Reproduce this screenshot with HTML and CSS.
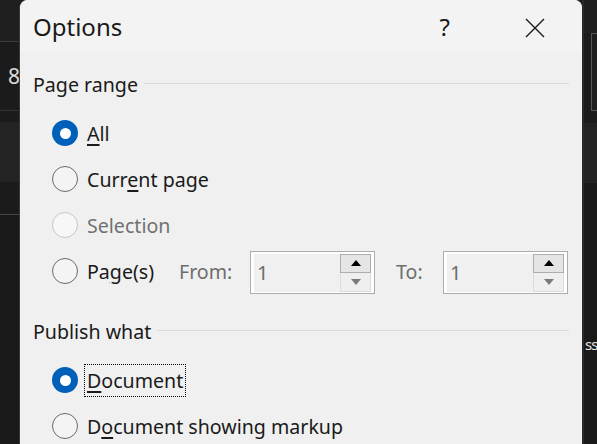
FILE: index.html
```html
<!DOCTYPE html>
<html>
<head>
<meta charset="utf-8">
<link rel="stylesheet" href="styles.css">
</head>
<body>
<div class="screen">
  <div class="bg-left">
    <div class="l-top"></div>
    <div class="l-num">8</div>
    <div class="l-gap"></div>
    <div class="l-band"></div>
    <div class="l-gap2"></div>
    <div class="l-rest"></div>
  </div>
  <div class="dialog">
    <div class="titlebar">
      <span class="title">Options</span>
      <span class="help">?</span>
      <span class="close">
        <svg width="20" height="20" viewBox="0 0 20 20"><path d="M1 1 L19 19 M19 1 L1 19" stroke="#1a1a1a" stroke-width="1.4" fill="none"/></svg>
      </span>
    </div>
    <div class="content">
      <div class="group-head"><span>Page range</span><span class="rule"></span></div>
      <div class="options">
        <div class="row"><span class="radio checked"><span class="dot"></span></span><span class="label"><u>A</u>ll</span></div>
        <div class="row"><span class="radio"></span><span class="label">Curr<u>e</u>nt page</span></div>
        <div class="row disabled"><span class="radio"></span><span class="label">Selection</span></div>
        <div class="row">
          <span class="radio"></span><span class="label pages-label">Pa<u>g</u>e(s)</span>
          <span class="field-label from-label">From:</span>
          <span class="spin">
            <span class="spin-field">1</span>
            <span class="spin-btns">
              <span class="spin-up"><svg width="10" height="6" viewBox="0 0 10 6"><path d="M0 6 L5 0 L10 6 Z" fill="#000"/></svg></span>
              <span class="spin-down"><svg width="10" height="6" viewBox="0 0 10 6"><path d="M0 0 L5 6 L10 0 Z" fill="#7a7a7a"/></svg></span>
            </span>
          </span>
          <span class="field-label to-label">To:</span>
          <span class="spin">
            <span class="spin-field">1</span>
            <span class="spin-btns">
              <span class="spin-up"><svg width="10" height="6" viewBox="0 0 10 6"><path d="M0 6 L5 0 L10 6 Z" fill="#000"/></svg></span>
              <span class="spin-down"><svg width="10" height="6" viewBox="0 0 10 6"><path d="M0 0 L5 6 L10 0 Z" fill="#7a7a7a"/></svg></span>
            </span>
          </span>
        </div>
      </div>
      <div class="group-head second"><span>Publish what</span><span class="rule"></span></div>
      <div class="options">
        <div class="row"><span class="radio checked"><span class="dot"></span></span><span class="label focused"><u>D</u>ocument</span></div>
        <div class="row"><span class="radio"></span><span class="label">D<u>o</u>cument showing markup</span></div>
      </div>
    </div>
  </div>
  <div class="bg-right">
    <div class="r-top"></div>
    <div class="r-box"></div>
    <div class="r-gap"></div>
    <div class="r-band"></div>
    <div class="r-gap2"></div>
    <div class="r-text">ss</div>
  </div>
</div>
</body>
</html>
```
FILE: styles.css
```css
html, body {
  margin: 0;
  padding: 0;
}
body {
  background: #1b1b1b;
  font-family: "Noto Sans", "Open Sans", sans-serif;
  width: 597px;
  height: 444px;
  overflow: hidden;
}
.screen {
  display: flex;
  height: 444px;
  overflow: hidden;
}

/* background app strips */
.bg-left {
  width: 20px;
  flex: none;
  display: flex;
  flex-direction: column;
  background: #1a1a1a;
}
.bg-left > div, .bg-right > div {
  flex-shrink: 0;
}
.l-top {
  height: 41px;
  background: #1f1f1f;
  border-bottom: 1px solid #3c3c3c;
}
.l-num {
  height: 68px;
  border-bottom: 1px solid #333;
  color: #dcdcdc;
  font-size: 21px;
  line-height: 68px;
  padding-left: 8px;
  background: #1b1b1b;
}
.l-gap { height: 11px; background: #1b1b1b; }
.l-band { height: 60px; background: #232323; }
.l-gap2 { height: 32px; background: #1b1b1b; border-bottom: 1px solid #474747; }
.bg-left > .l-rest { flex: 1; background: #191919; }

.bg-right {
  flex: 1;
  display: flex;
  flex-direction: column;
  background: #1b1b1b;
  border-left: 2px solid #2a2a2a;
}
.r-top { height: 33px; background: #1f1f1f; }
.r-box {
  height: 76px;
  margin-left: 7px;
  border: 1px solid #555;
  border-right: none;
  background: #1e1e1e;
}
.r-gap { height: 12px; }
.r-band { height: 60px; background: #232323; }
.r-gap2 { height: 152px; background: #191919; }
.bg-right > .r-text {
  color: #e8e8e8;
  font-size: 15px;
  letter-spacing: -1px;
  line-height: 18px;
  padding-left: 1px;
  background: #191919;
  flex: 1;
}

/* dialog */
.dialog {
  width: 562px;
  flex: none;
  background: #f0f0f0;
  border-radius: 8px 8px 0 0;
  box-shadow: 0 0 0 1px #3a3a3a;
  display: flex;
  flex-direction: column;
  color: #1a1a1a;
}
.titlebar {
  height: 53px;
  flex: none;
  background: #f3f3f3;
  border-radius: 8px 8px 0 0;
  display: flex;
  align-items: center;
  padding-left: 13px;
}
.title {
  font-size: 24px;
}
.help {
  font-size: 24px;
  margin-left: auto;
}
.close {
  width: 20px;
  height: 20px;
  display: flex;
  margin-left: 75px;
  margin-right: 37px;
  margin-top: 2px;
}

.content {
  flex: none;
  padding: 0 13px;
}
.group-head {
  height: 30px;
  margin-top: 17px;
  display: flex;
  align-items: center;
  font-size: 19.6px;
  gap: 6px;
}
.group-head.second {
  margin-top: 23px;
}
.group-head span:first-child {
  line-height: 30px;
}
.rule {
  flex: 1;
  height: 1px;
  background: #dadada;
  margin-bottom: 3px;
}
.options {
  margin-top: 10px;
  padding-left: 19px;
}
.row {
  height: 46px;
  display: flex;
  align-items: center;
  font-size: 19.6px;
}
.radio {
  width: 26px;
  height: 26px;
  box-sizing: border-box;
  border-radius: 50%;
  border: 1.5px solid #6a6a6a;
  background: #f4f4f4;
  flex: none;
  display: flex;
  align-items: center;
  justify-content: center;
}
.radio.checked {
  border: none;
  background: #005fb8;
}
.dot {
  width: 11px;
  height: 11px;
  border-radius: 50%;
  background: #fff;
}
.label {
  margin-left: 9px;
  white-space: nowrap;
}
.label u {
  text-decoration-thickness: 1.5px;
  text-underline-offset: 3px;
}
.label.focused {
  margin-left: 6px;
  padding: 0 2px;
  line-height: 31px;
  border: 1px dotted #000;
}
.row.disabled .radio {
  border-color: #c6c6c6;
  background: #f7f7f7;
}
.row.disabled .label {
  color: #707070;
}
.pages-label {
  width: 92px;
  flex: none;
}
.field-label {
  color: #6d6d6d;
  flex: none;
}
.from-label {
  width: 71px;
}
.to-label {
  margin-left: 21px;
  width: 47px;
}
.spin {
  width: 125px;
  height: 43px;
  flex: none;
  box-sizing: border-box;
  border: 1px solid #adadad;
  background: #fff;
  padding: 2px 3px 1px 3px;
  display: flex;
  margin-top: 2px;
}
.spin-field {
  flex: 1;
  background: #f0f0f0;
  color: #6d6d6d;
  font-size: 20px;
  line-height: 38px;
  padding-left: 3px;
}
.spin-btns {
  width: 31px;
  display: flex;
  flex-direction: column;
}
.spin-up {
  height: 19px;
  box-sizing: border-box;
  border: 1px solid #adadad;
  background: #e5e5e5;
  display: flex;
  align-items: center;
  justify-content: center;
}
.spin-down {
  height: 19px;
  box-sizing: border-box;
  border: 1px solid #dcdcdc;
  border-top: none;
  background: #efefef;
  display: flex;
  align-items: center;
  justify-content: center;
}
```
